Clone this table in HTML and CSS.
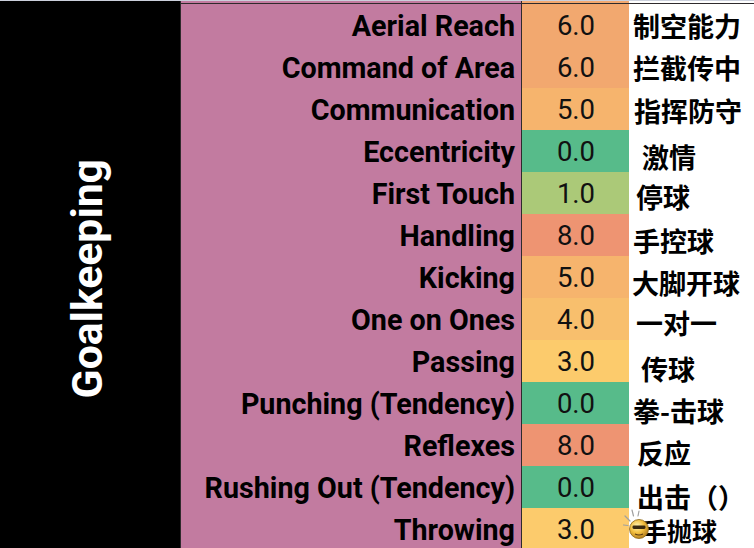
FILE: index.html
```html
<!DOCTYPE html>
<html lang="en">
<head>
<meta charset="utf-8">
<title>Goalkeeping</title>
<link rel="stylesheet" href="styles.css">
</head>
<body>
<div class="topline"></div>
<div class="sheet">
  <div class="side"><span class="side-title">Goalkeeping</span></div>
  <div class="table">
    <div class="cap"><div class="cap-label"></div><div class="cap-val"></div><div class="cap-rest"></div></div>
    <div class="rows">
      <div class="row"><div class="label">Aerial Reach</div><div class="val v6">6.0</div><div class="cn">制空能力</div></div>
      <div class="row"><div class="label">Command of Area</div><div class="val v6">6.0</div><div class="cn">拦截传中</div></div>
      <div class="row"><div class="label">Communication</div><div class="val v5">5.0</div><div class="cn">指挥防守</div></div>
      <div class="row"><div class="label">Eccentricity</div><div class="val v0">0.0</div><div class="cn">激情</div></div>
      <div class="row"><div class="label">First Touch</div><div class="val v1">1.0</div><div class="cn">停球</div></div>
      <div class="row"><div class="label">Handling</div><div class="val v8">8.0</div><div class="cn">手控球</div></div>
      <div class="row"><div class="label">Kicking</div><div class="val v5">5.0</div><div class="cn">大脚开球</div></div>
      <div class="row"><div class="label">One on Ones</div><div class="val v4">4.0</div><div class="cn">一对一</div></div>
      <div class="row"><div class="label">Passing</div><div class="val v3">3.0</div><div class="cn">传球</div></div>
      <div class="row"><div class="label">Punching (Tendency)</div><div class="val v0">0.0</div><div class="cn">拳-击球</div></div>
      <div class="row"><div class="label">Reflexes</div><div class="val v8">8.0</div><div class="cn">反应</div></div>
      <div class="row"><div class="label">Rushing Out (Tendency)</div><div class="val v0">0.0</div><div class="cn">出击（）</div></div>
      <div class="row"><div class="label">Throwing</div><div class="val v3">3.0</div><div class="cn"><span class="cn-text">手抛球</span>
        <svg class="sticker" viewBox="0 0 28 32" aria-hidden="true">
          <defs>
            <radialGradient id="sg" cx="0.4" cy="0.35" r="0.7">
              <stop offset="0" stop-color="#fff4b8"/>
              <stop offset="0.5" stop-color="#f3c040"/>
              <stop offset="1" stop-color="#b07a1c"/>
            </radialGradient>
          </defs>
          <g stroke="#a0a0a0" stroke-width="1.2" stroke-linecap="round">
            <line x1="2" y1="7" x2="7" y2="12"/>
            <line x1="9" y1="1" x2="10.5" y2="7"/>
            <line x1="0.5" y1="16" x2="5" y2="16.5"/>
            <line x1="16" y1="2" x2="15" y2="7"/>
          </g>
          <circle cx="16" cy="20" r="9.5" fill="url(#sg)" stroke="#8a6414" stroke-width="0.8"/>
          <rect x="9.5" y="16.5" width="13" height="3.4" rx="1.3" fill="#3a2a10"/>
          <path d="M12 25 Q16 27 20 25" stroke="#5a3a10" stroke-width="1.1" fill="none"/>
        </svg>
      </div></div>
    </div>
  </div>
</div>
</body>
</html>
```

FILE: styles.css
```css
* { box-sizing: border-box; }

html, body {
  margin: 0;
  padding: 0;
  background: #ffffff;
  overflow: hidden;
}

body {
  width: 754px;
  height: 548px;
  font-family: Roboto, "Noto Sans", sans-serif;
}

.topline {
  height: 1px;
  background: #cbd0dc;
}

.sheet {
  display: flex;
  height: 547px;
}

.side {
  width: 180px;
  flex: none;
  background: #000000;
  display: flex;
  align-items: center;
  justify-content: center;
  padding-top: 8px;
  padding-right: 6px;
}

.side-title {
  writing-mode: vertical-rl;
  transform: rotate(180deg);
  color: #ffffff;
  font-family: Roboto, sans-serif;
  font-weight: 700;
  font-size: 42.7px;
  line-height: 1;
}

.table {
  border-left: 1px solid #2e2a2c;
  width: 574px;
  flex: none;
  display: flex;
  flex-direction: column;
}

.cap {
  display: grid;
  grid-template-columns: 341px 107px 1fr;
  height: 2px;
  flex: none;
}
.cap-label { background: #c27ba0; border-right: 1px solid #2e2a2c; }
.cap-val { background: #f2a86f; }
.cap-rest { background: #ffffff; }

.rows {
  border-top: 1px solid #2e2a2c;
  display: flex;
  flex-direction: column;
}

.row {
  display: grid;
  grid-template-columns: 341px 107px 1fr;
  grid-template-rows: 42px;
  height: 42px;
  flex: none;
}

.label {
  background: #c27ba0;
  border-right: 1px solid #2e2a2c;
  color: #000000;
  font-weight: 700;
  font-size: 28.7px;
  text-align: right;
  padding-right: 6px;
  padding-top: 1px;
  display: flex;
  align-items: center;
  justify-content: flex-end;
  white-space: nowrap;
}

.val {
  display: flex;
  align-items: center;
  justify-content: center;
  font-size: 27.5px;
  font-weight: 400;
  color: #111111;
  padding-left: 1px;
  padding-top: 1px;
}

.v0 { background: #57bb8a; }
.v1 { background: #abc978; }
.v3 { background: #fccb6c; }
.v4 { background: #f8bf6d; }
.v5 { background: #f6b46d; }
.v6 { background: #f2a86f; }
.v8 { background: #ee9472; }

.cn {
  position: relative;
  display: flex;
  align-items: center;
  padding-left: 4px;
  font-family: "Noto Sans CJK SC", sans-serif;
  font-weight: 700;
  font-size: 27px;
  line-height: 1.2;
  color: #000000;
  white-space: nowrap;
}

.row:nth-child(1) .cn { padding-left: 4px; padding-top: 2px; }
.row:nth-child(2) .cn { padding-left: 4px; padding-top: 2px; }
.row:nth-child(3) .cn { padding-left: 5px; padding-top: 4px; }
.row:nth-child(4) .cn { padding-left: 13px; padding-top: 13px; }
.row:nth-child(5) .cn { padding-left: 7px; padding-top: 9px; }
.row:nth-child(6) .cn { padding-left: 4px; padding-top: 13px; }
.row:nth-child(7) .cn { padding-left: 3px; padding-top: 12px; }
.row:nth-child(8) .cn { padding-left: 7px; padding-top: 9px; }
.row:nth-child(9) .cn { padding-left: 12px; padding-top: 17px; }
.row:nth-child(10) .cn { padding-left: 4px; padding-top: 16px; }
.row:nth-child(11) .cn { padding-left: 8px; padding-top: 16px; }
.row:nth-child(12) .cn { padding-left: 8px; padding-top: 20px; }
.row:nth-child(13) .cn { padding-left: 13px; padding-top: 2px; font-size: 25px; }

.sticker {
  position: absolute;
  left: -6px;
  top: 1px;
  width: 28px;
  height: 32px;
}
```
